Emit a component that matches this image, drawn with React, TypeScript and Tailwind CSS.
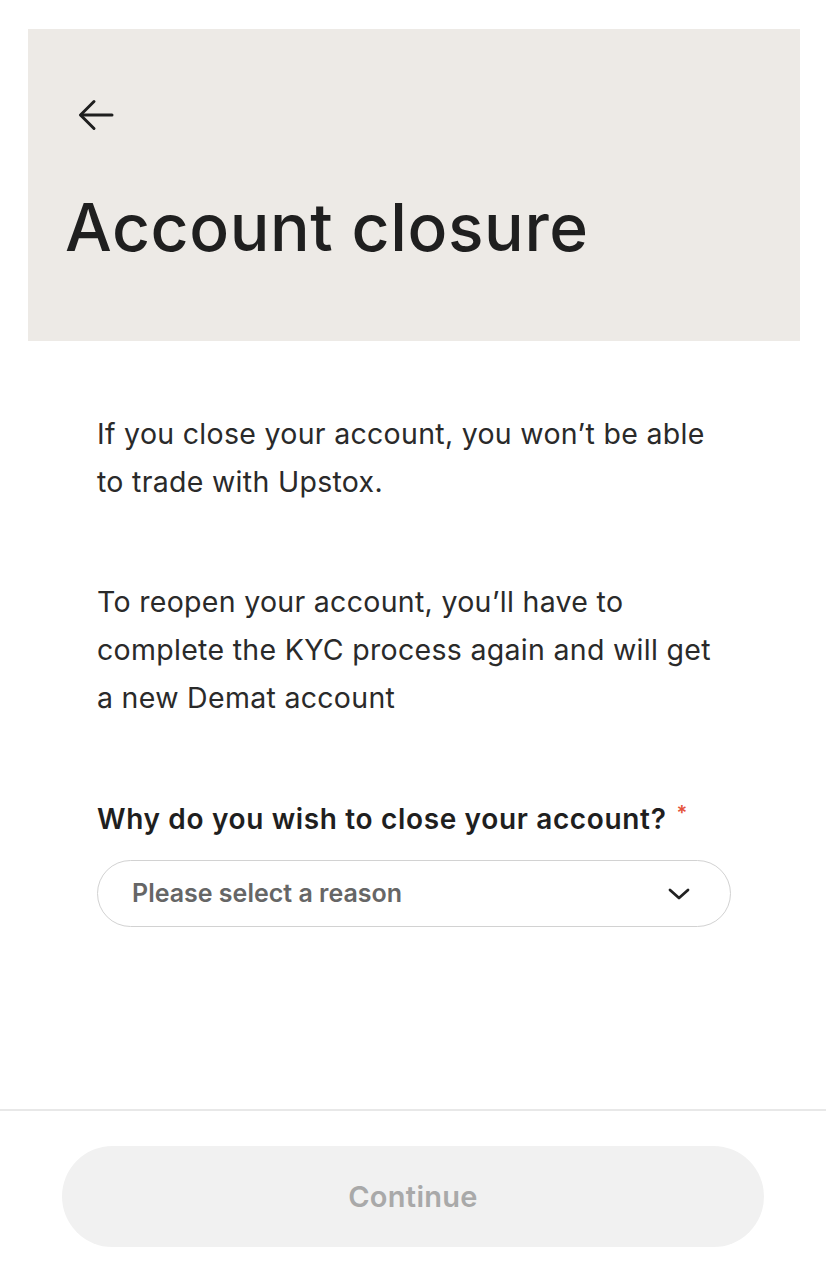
function BackArrow() {
  return (
    <svg width="36" height="32" viewBox="0 0 36 32" fill="none" stroke="#1f1f1f" strokeWidth="3" strokeLinecap="round" strokeLinejoin="round">
      <path d="M34 16H3" />
      <path d="M16 2.5L2.5 16L16 29.5" />
    </svg>
  );
}

function Chevron() {
  return (
    <svg width="22" height="12" viewBox="0 0 22 12" fill="none" stroke="#222" strokeWidth="2.8" strokeLinecap="round" strokeLinejoin="round">
      <path d="M2 2L11 10L20 2" />
    </svg>
  );
}

export default function App() {
  return (
    <div className="flex flex-col h-[1278px] bg-white text-[#222] font-['Inter','Liberation_Sans',sans-serif]">
      {/* Header */}
      <header className="mt-[29px] ml-[28px] mr-[26px] h-[312px] bg-[#edeae6] flex flex-col pl-[37px]">
        <button className="mt-[70px] w-[36px] h-[32px] flex items-center justify-center ml-[13px]">
          <BackArrow />
        </button>
        <h1 className="mt-[58px] text-[66px] leading-[76px] font-medium tracking-[0.6px] text-[#1f1f1f]">
          Account closure
        </h1>
      </header>

      {/* Body */}
      <main className="flex-1 pl-[97px] pr-[95px] pt-[69px]">
        <p className="text-[28.5px] leading-[48px] tracking-[0.3px] text-[#2a2a2a]">
          If you close your account, you won’t be able to trade with Upstox.
        </p>
        <p className="mt-[72px] text-[28.5px] leading-[48px] tracking-[0.3px] text-[#2a2a2a]">
          To reopen your account, you’ll have to complete the KYC process again and will get a new Demat account
        </p>

        <label className="mt-[81px] block text-[28px] leading-[32px] tracking-[0.65px] font-semibold text-[#1f1f1f]">
          Why do you wish to close your account?
          <span className="ml-[10px] align-top text-[20px] leading-[20px] text-[#e5533c]">*</span>
        </label>

        <button className="mt-[25px] w-full h-[67px] rounded-full border-[1.5px] border-[#d2d2d2] flex items-center justify-between pl-[34px] pr-[40px]">
          <span className="text-[25px] font-semibold text-[#666]">Please select a reason</span>
          <Chevron />
        </button>
      </main>

      {/* Footer */}
      <footer className="border-t-2 border-[#e8e8e8] pt-[35px] pb-[31px] px-[62px]">
        <button className="w-full h-[101px] rounded-full bg-[#f1f1f1] text-[29px] tracking-[0.3px] font-semibold text-[#a9a9a9]">
          Continue
        </button>
      </footer>
    </div>
  );
}
